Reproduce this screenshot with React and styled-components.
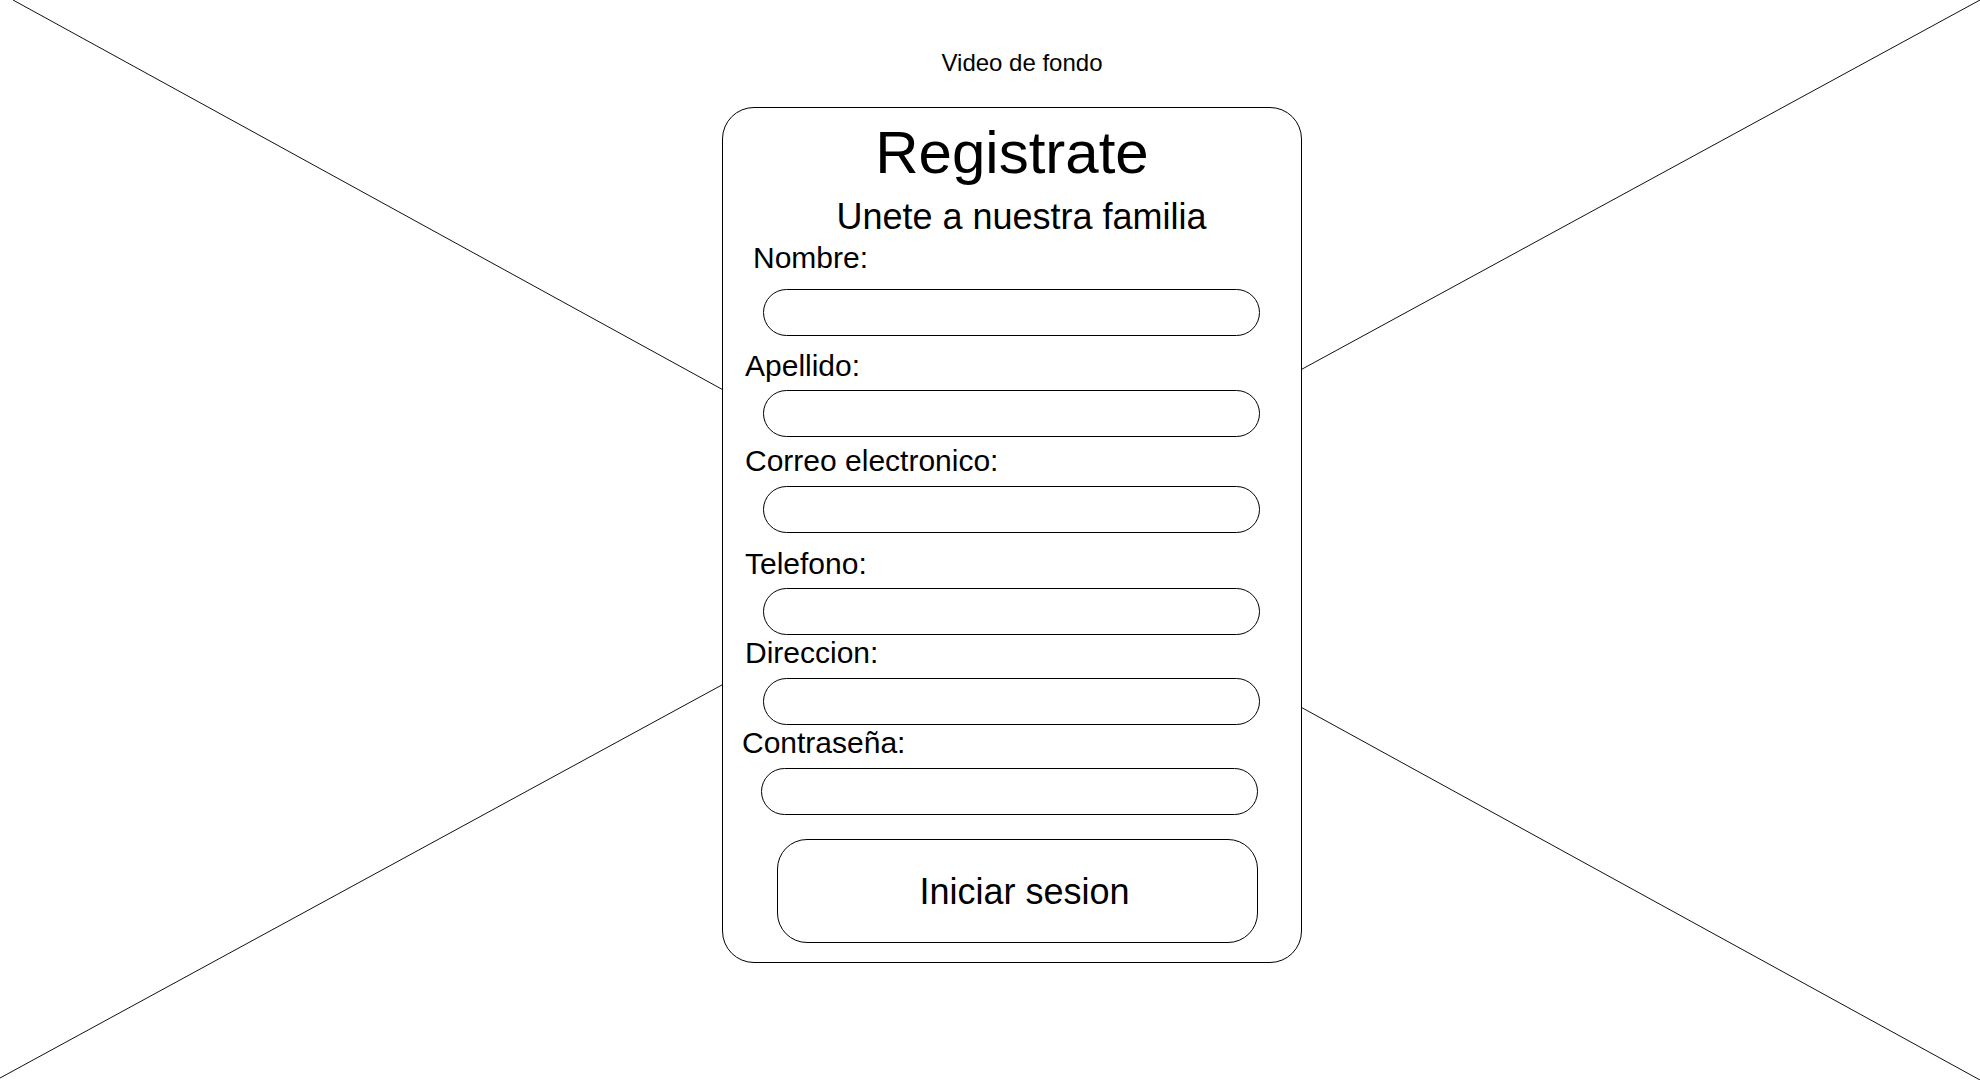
import React from 'react';
import styled, {createGlobalStyle} from 'styled-components';

const GlobalStyle = createGlobalStyle`
  html, body {
    margin: 0;
    padding: 0;
    background: #fff;
  }
  body {
    font-family: "Liberation Sans", Arial, sans-serif;
    color: #000;
  }
`;

const fields = [
  {label: 'Nombre:', indent: 30, labelGap: 4, inputGap: 14, inputLeft: 40},
  {label: 'Apellido:', indent: 22, labelGap: 13, inputGap: 7, inputLeft: 40},
  {label: 'Correo electronico:', indent: 22, labelGap: 7, inputGap: 8, inputLeft: 40},
  {label: 'Telefono:', indent: 22, labelGap: 14, inputGap: 7, inputLeft: 40},
  {label: 'Direccion:', indent: 22, labelGap: 1, inputGap: 8, inputLeft: 40},
  {label: 'Contraseña:', indent: 19, labelGap: 1, inputGap: 8, inputLeft: 38, type: 'password'},
];

// the crossed-out "video" placeholder behind the form
const VideoPlaceholder = () => (
  <Backdrop viewBox="0 0 1980 1080" preserveAspectRatio="none">
    <line x1="13" y1="0" x2="1980" y2="1080" />
    <line x1="0" y1="1078" x2="1980" y2="0" />
  </Backdrop>
);

export default function App() {
  return (
    <Page>
      <GlobalStyle />
      <VideoPlaceholder />
      <Stage>
        <Caption>Video de fondo</Caption>
        <Card>
          <Title>Registrate</Title>
          <Subtitle>Unete a nuestra familia</Subtitle>
          {fields.map((f) => (
            <Field key={f.label}>
              <Label $indent={f.indent} $gap={f.labelGap}>
                {f.label}
              </Label>
              <TextInput type={f.type || 'text'} $gap={f.inputGap} $left={f.inputLeft} />
            </Field>
          ))}
          <SubmitButton type="button">Iniciar sesion</SubmitButton>
        </Card>
      </Stage>
    </Page>
  );
}

const Page = styled.div`
  position: relative;
  width: 1980px;
  height: 1080px;
  overflow: hidden;
  background: #fff;
`;

const Backdrop = styled.svg`
  position: absolute;
  inset: 0;
  width: 100%;
  height: 100%;
  line {
    stroke: #111;
    stroke-width: 1;
  }
`;

const Stage = styled.div`
  position: relative;
  z-index: 1;
  width: 580px;
  margin-left: 722px;
  display: flex;
  flex-direction: column;
`;

const Caption = styled.div`
  margin-top: 50px;
  padding-left: 20px;
  font-size: 24px;
  line-height: 26px;
  text-align: center;
`;

const Card = styled.div`
  box-sizing: border-box;
  margin-top: 31px;
  height: 856px;
  border: 1px solid #000;
  border-radius: 32px;
  background: #fff;
  padding: 15px 0 0;
  display: flex;
  flex-direction: column;
`;

const Title = styled.h1`
  margin: 0;
  font-size: 60px;
  font-weight: 400;
  line-height: 60px;
  text-align: center;
`;

const Subtitle = styled.h2`
  margin: 14px 0 0;
  padding-left: 19px;
  font-size: 36px;
  font-weight: 400;
  line-height: 40px;
  text-align: center;
`;

const Field = styled.div`
  display: flex;
  flex-direction: column;
`;

const Label = styled.label`
  margin-top: ${(p) => p.$gap}px;
  padding-left: ${(p) => p.$indent}px;
  font-size: 30px;
  line-height: 34px;
`;

const TextInput = styled.input`
  box-sizing: border-box;
  margin: ${(p) => p.$gap}px 0 0 ${(p) => p.$left}px;
  width: 497px;
  height: 47px;
  border: 1px solid #000;
  border-radius: 24px;
  background: #fff;
  padding: 0 20px;
  font: inherit;
  font-size: 20px;
  outline: none;
`;

const SubmitButton = styled.button`
  box-sizing: border-box;
  margin: 24px 0 0 54px;
  width: 481px;
  height: 104px;
  border: 1px solid #000;
  border-radius: 30px;
  background: #fff;
  padding: 2px 0 0 14px;
  font-family: "Liberation Sans", Arial, sans-serif;
  font-size: 36px;
  color: #000;
  cursor: pointer;
`;
